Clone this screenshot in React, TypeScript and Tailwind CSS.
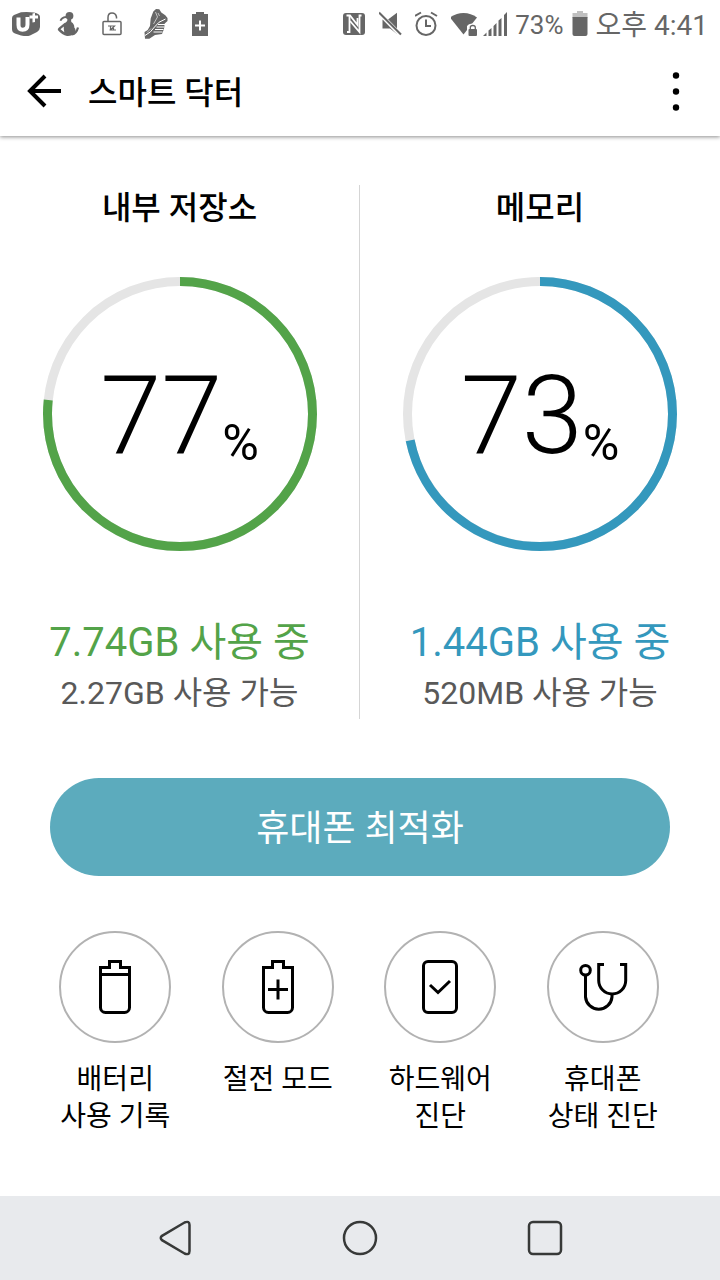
import type { ReactNode } from "react";

type Usage = {
  title: string;
  percent: number;
  arc: number;
  used: string;
  free: string;
  stroke: string;
  text: string;
};

const usages: Usage[] = [
  {
    title: "내부 저장소",
    percent: 77,
    arc: 76.7,
    used: "7.74GB 사용 중",
    free: "2.27GB 사용 가능",
    stroke: "stroke-[#53a349]",
    text: "text-[#53a349]",
  },
  {
    title: "메모리",
    percent: 73,
    arc: 71.8,
    used: "1.44GB 사용 중",
    free: "520MB 사용 가능",
    stroke: "stroke-[#3498bd]",
    text: "text-[#3498bd]",
  },
];

function StatusIcon({ children }: { children: ReactNode }) {
  return (
    <svg viewBox="0 0 28 28" className="w-7 h-7 shrink-0 overflow-visible" fill="currentColor" aria-hidden="true">
      {children}
    </svg>
  );
}

function StatusBar() {
  return (
    <div className="relative bg-white h-12 flex items-center justify-between px-3 text-[#666666]">
      <div className="flex items-center gap-4">
        <StatusIcon>
          <path d="M2 5L9 2.300Q15 1.500 22 2.500Q28 3.500 28 7V17Q28 20 25 22L18 25.500Q15 26.500 9 25.500L3 23.500Q0 22.500 0 19V8Q0 6 2 5Z" />
          <path
            d="M6.500 7.500V15Q6.500 19.800 10.500 19.800Q15.500 19.800 15.500 14.500V7"
            fill="none"
            stroke="#fff"
            strokeWidth="4"
          />
          <path d="M17.500 5.500H20.500V3.500L23 3V5.500H26V8.500H23V12L20.500 12.500V8.500H17.500Z" fill="#fff" />
        </StatusIcon>
        <StatusIcon>
          <circle cx="13.500" cy="5.800" r="3.900" />
          <path d="M4.500 10.800Q5.500 7.500 10 7" fill="none" stroke="currentColor" strokeWidth="1.800" />
          <path d="M11.500 9H15L15.300 12Q18.500 14 18.300 17.500Q20.500 20 19 23Q16 26.300 11 26Q6 25 1.800 20Q1.500 18.500 3 17.500L8.500 13Q11.500 12 11.500 9Z" />
          <path d="M4.500 19.300L7.800 16.500Q7.500 19.500 8.300 22.300Z" fill="#fff" />
          <path d="M16 24.500Q20.500 23.500 22 17.500" fill="none" stroke="currentColor" strokeWidth="2.200" />
        </StatusIcon>
        <StatusIcon>
          <rect x="3" y="11.500" width="18" height="13" rx="1" fill="none" stroke="currentColor" strokeWidth="1.500" />
          <path d="M8 11.500V7.500Q8 3 12 3Q15.800 3 16.500 7V8.500" fill="none" stroke="currentColor" strokeWidth="1.500" />
          <path
            d="M8 16H14.500L10.500 20M9.500 20H16M13.500 15.500V20M10.500 16V20"
            fill="none"
            stroke="currentColor"
            strokeWidth="1.200"
          />
        </StatusIcon>
        <StatusIcon>
          <path d="M9.300 1.500L12 -1L15.300 -.700L17.300 2.500L21.300 5.300L23.500 8V11L20.700 13.500L20 19L18 24L11 25L5.300 28.700H1L.500 22L3.700 20L6 16L6.700 8.500Z" />
          <path
            d="M1 25.500Q7 22.500 10.500 17T21.500 9M14 14.500H21M12.500 17H20M11 19.500H19.500M9.500 22H18.500"
            fill="none"
            stroke="#fff"
            strokeWidth="1"
          />
          <path
            d="M11.500 2L13.500 7L9.500 14M14 3L15.500 6M3 22.500L7 18.500"
            fill="none"
            stroke="#fff"
            strokeWidth=".6"
          />
        </StatusIcon>
        <StatusIcon>
          <path d="M8 2H16V4H20V26H4V4H8Z" />
          <path d="M12 10.500V20.500M7 15.500H17" fill="none" stroke="#fff" strokeWidth="2" />
        </StatusIcon>
      </div>

      <div className="flex items-center">
        <div className="flex items-center gap-3">
          <svg viewBox="0 0 24 28" className="w-6 h-7" fill="none" aria-hidden="true">
            <rect x="0" y="3" width="22" height="22" rx="3" fill="currentColor" />
            <path d="M3.500 5.500H7L14.500 15V8" stroke="#fff" strokeWidth="1.800" />
            <path d="M6.500 6V22H4" stroke="#fff" strokeWidth="1.800" />
            <path d="M18.500 5.500H16.500V22L7 11" stroke="#fff" strokeWidth="1.800" />
          </svg>
          <svg viewBox="0 0 24 28" className="w-6 h-7" fill="currentColor" aria-hidden="true">
            <path d="M9 9.500L18 2.800V24L11 18.500H3.500V9.500Z" />
            <path d="M1 4L22 25.500" stroke="#fff" strokeWidth="4" />
            <path d="M0 2.500L22 24.500" stroke="currentColor" strokeWidth="2" />
          </svg>
          <svg viewBox="0 0 24 28" className="w-6 h-7" fill="none" stroke="currentColor" aria-hidden="true">
            <circle cx="11" cy="15.500" r="9.500" strokeWidth="2" />
            <path d="M11 9.500V16H16" strokeWidth="2" />
            <path d="M0 6L6 2.500M16 2.500L22 6" strokeWidth="2" />
          </svg>
          <div className="flex items-center gap-1">
            <svg viewBox="0 0 28 28" className="w-7 h-7" fill="currentColor" aria-hidden="true">
              <path d="M-1 7.500Q5 3 12.500 3T26 7.500L12.500 24.500Z" />
              <path d="M16 28V16Q17.500 13.500 21 13.500Q25 13.500 27 17V28Z" fill="#fff" />
              <rect x="17.500" y="19" width="8.500" height="7" rx="1" />
              <path d="M19.300 19.500V17.500Q19.300 15.500 21.800 15.500Q24.300 15.500 24.300 17.500V19.500" fill="none" stroke="currentColor" strokeWidth="1.300" />
            </svg>
            <svg viewBox="0 0 26 28" className="w-[26px] h-7" fill="currentColor" aria-hidden="true">
              <path d="M0 26L3.500 22.500V26ZM5.500 20.500L8.500 18V26H5.500ZM10.500 16L13.500 13V26H10.500ZM15.500 10.500L18.500 8V26H15.500ZM21 5L24 2V26H21Z" />
            </svg>
          </div>
        </div>
        <span className="ml-1.5 pt-0.5 text-[26px] leading-8">73%</span>
        <svg viewBox="0 0 16 28" className="w-4 h-7 mx-2" fill="currentColor" aria-hidden="true">
          <path d="M5 1H11V3H15.500V8H.500V3H5Z" fill="#c0c0c0" />
          <path d="M.500 7H15.500V24Q15.500 26 13.500 26H2.500Q.500 26 .500 24Z" />
        </svg>
        <span className="pt-1 text-[28px] leading-8">오후 4:41</span>
      </div>
    </div>
  );
}

function Header() {
  return (
    <header className="h-[88px] flex items-center px-6 shadow-[0_1px_4px_rgba(0,0,0,0.45)]">
      <button type="button" aria-label="뒤로" className="w-10 h-10">
        <svg viewBox="0 0 40 40" className="w-10 h-10" fill="none" stroke="currentColor" strokeWidth="4">
          <path d="M37 19H7M21 4L6 19L21 34" />
        </svg>
      </button>
      <h1 className="ml-6 pt-0.5 flex-1 text-[32px] leading-10 font-medium">스마트 닥터</h1>
      <button type="button" aria-label="더보기" className="w-10 h-10">
        <svg viewBox="0 0 40 40" className="w-10 h-10" fill="currentColor">
          <circle cx="20" cy="3.500" r="3.200" />
          <circle cx="20" cy="19.500" r="3.200" />
          <circle cx="20" cy="35.500" r="3.200" />
        </svg>
      </button>
    </header>
  );
}

function UsagePanel({ usage }: { usage: Usage }) {
  return (
    <section className="w-1/2 flex flex-col items-center border-[#d5d5d5] first:border-r">
      <h2 className="text-[32px] leading-[46px] font-medium">{usage.title}</h2>
      <div className="relative mt-[46px] w-[274px] h-[274px] flex items-center justify-center">
        <svg viewBox="0 0 274 274" className="absolute inset-0 -rotate-90" fill="none" strokeWidth="9" aria-hidden="true">
          <circle cx="137" cy="137" r="132.500" className="stroke-[#e5e5e5]" />
          <circle
            cx="137"
            cy="137"
            r="132.500"
            pathLength="100"
            strokeDasharray={`${usage.arc} 100`}
            className={usage.stroke}
          />
        </svg>
        <p className="flex items-end pt-1">
          <span className="text-[110px] leading-[110px] font-light">{usage.percent}</span>
          <span className="text-[50px] leading-[56px]">%</span>
        </p>
      </div>
      <p className={`mt-[68px] text-[40px] leading-[48px] ${usage.text}`}>{usage.used}</p>
      <p className="text-[32px] leading-[52px] text-[#595959]">{usage.free}</p>
    </section>
  );
}

function BatteryShape() {
  return <path d="M13.500 8.500H22.500V2.500H33.500V8.500H42.500V48.500A5 5 0 0 1 37.500 53.500H18.500A5 5 0 0 1 13.500 48.500Z" />;
}

function Shortcut({ lines, children }: { lines: string[]; children: ReactNode }) {
  return (
    <button type="button" className="flex flex-col items-center">
      <span className="w-28 h-28 rounded-full border-2 border-[#b2b2b2] flex items-center justify-center">
        <svg viewBox="0 0 56 56" className="w-14 h-14" fill="none" stroke="currentColor" strokeWidth="3" aria-hidden="true">
          {children}
        </svg>
      </span>
      <span className="mt-[18px] text-[28px] leading-[37px]">
        {lines.map((line) => (
          <span key={line} className="block whitespace-nowrap">
            {line}
          </span>
        ))}
      </span>
    </button>
  );
}

function NavBar() {
  return (
    <nav className="mt-auto h-[84px] bg-[#e8eaed] flex justify-center text-[#373938]">
      <button type="button" aria-label="이전" className="w-[185px] flex items-center justify-center">
        <svg viewBox="0 0 36 36" className="w-9 h-9" fill="none" stroke="currentColor" strokeWidth="2.500">
          <path d="M5 15.800L27.500 2.500Q32.500 .5 32.500 5V31Q32.500 35.500 27.500 33.500L5 20.200Q2.500 18 5 15.800Z" />
        </svg>
      </button>
      <button type="button" aria-label="홈" className="w-[185px] flex items-center justify-center">
        <svg viewBox="0 0 36 36" className="w-9 h-9" fill="none" stroke="currentColor" strokeWidth="2.500">
          <circle cx="18" cy="18" r="16" />
        </svg>
      </button>
      <button type="button" aria-label="최근 앱" className="w-[185px] flex items-center justify-center">
        <svg viewBox="0 0 36 36" className="w-9 h-9" fill="none" stroke="currentColor" strokeWidth="2.500">
          <rect x="2" y="2" width="32" height="32" rx="4" />
        </svg>
      </button>
    </nav>
  );
}

export default function App() {
  return (
    <div
      lang="ko"
      className="min-h-screen flex flex-col bg-white text-black font-[Roboto,'Noto_Sans_CJK_KR',sans-serif]"
    >
      <StatusBar />
      <Header />

      <main className="pb-10">
        <div className="mt-[49px] flex">
          {usages.map((usage) => (
            <UsagePanel key={usage.title} usage={usage} />
          ))}
        </div>

        <div className="mt-[59px] px-[50px]">
          <button type="button" className="w-full h-[98px] pt-1 rounded-full bg-[#5cabbd] text-white text-[36px] leading-[48px]">
            휴대폰 최적화
          </button>
        </div>

        <div className="mt-[55px] pl-[34px] pr-9 grid grid-cols-4 items-start">
          <Shortcut lines={["배터리", "사용 기록"]}>
            <BatteryShape />
            <path d="M13.500 15.500H42.500" />
          </Shortcut>
          <Shortcut lines={["절전 모드"]}>
            <BatteryShape />
            <path d="M18 30.500H38M28 20.500V40.500" />
          </Shortcut>
          <Shortcut lines={["하드웨어", "진단"]}>
            <rect x="11.500" y="2.500" width="33" height="51" rx="4.500" />
            <path d="M18 26L26 33.500L38 22" />
          </Shortcut>
          <Shortcut lines={["휴대폰", "상태 진단"]}>
            <circle cx="10.500" cy="11.300" r="4.800" />
            <path d="M10.500 16V38A13.300 13.300 0 0 0 37 38V35" />
            <path d="M29 5.500H23.700V21.500A13.500 13.500 0 0 0 50.700 21.500V5.500H45" />
          </Shortcut>
        </div>
      </main>

      <NavBar />
    </div>
  );
}
